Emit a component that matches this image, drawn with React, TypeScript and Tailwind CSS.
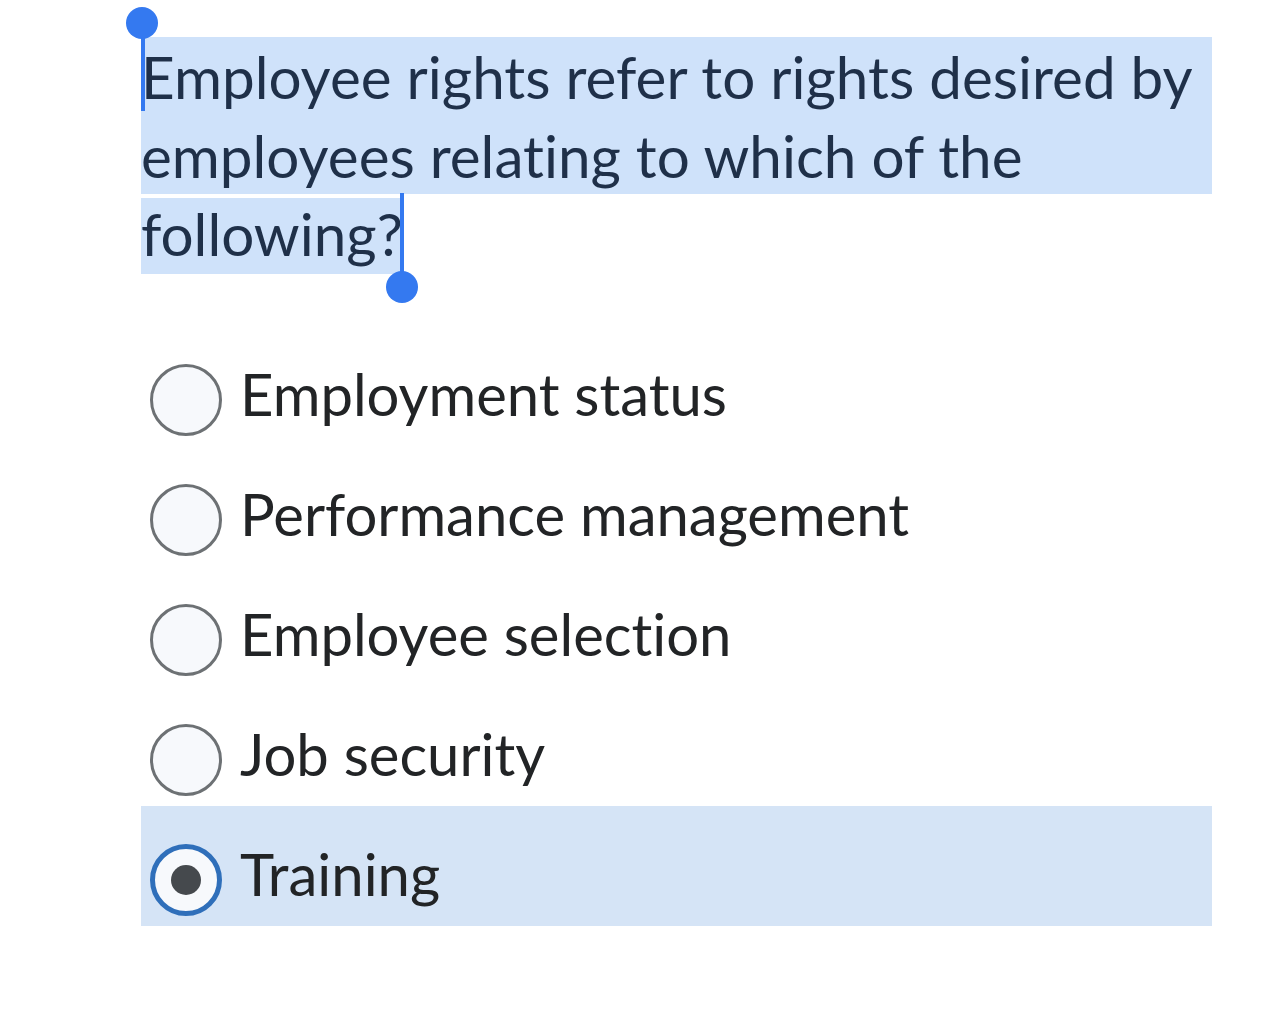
import React from 'react';

const options = [
  'Employment status',
  'Performance management',
  'Employee selection',
  'Job security',
  'Training',
];

const SELECTED = 4;

function Radio({ checked }: { checked: boolean }) {
  if (checked) {
    return (
      <span className="flex h-[72px] w-[72px] shrink-0 items-center justify-center rounded-full border-[5px] border-[#2f6fba] bg-[#f7f9fc]">
        <span className="h-[30px] w-[30px] rounded-full bg-[#45494d]" />
      </span>
    );
  }
  return (
    <span className="h-[72px] w-[72px] shrink-0 rounded-full border-[3px] border-[#6d7174] bg-[#f7f9fc]" />
  );
}

export default function App() {
  return (
    <div className="min-h-[1018px] w-[1284px] bg-white font-['Lato',sans-serif] [font-variant-ligatures:none]">
      <div className="ml-[141px] w-[1071px] pt-[37px]">
        {/* question with text selection */}
        <div className="relative text-[58.4px] leading-[78.5px] text-[#1f3049]">
          <div className="bg-[#cfe2fa]">Employee rights refer to rights desired by</div>
          <div className="bg-[#cfe2fa]">employees relating to which of the</div>
          <div>
            <span className="bg-[#cfe2fa] pb-[6px]">following?</span>
          </div>
          <span className="absolute left-0 top-0 h-[74px] w-[4px] bg-[#3479f0]" />
          <span className="absolute left-[-15px] top-[-30px] h-[32px] w-[32px] rounded-full bg-[#3479f0]" />
          <span className="absolute left-[259px] top-[156px] h-[92px] w-[4px] bg-[#3479f0]" />
          <span className="absolute left-[245px] top-[234px] h-[32px] w-[32px] rounded-full bg-[#3479f0]" />
        </div>

        <div className="mt-[53px] flex flex-col">
          {options.map((o, i) => (
            <label
              key={o}
              className={`h-[120px] pl-[9px] pt-[38px] text-[58px] text-[#222426] ${
                i === SELECTED ? 'bg-[#d5e4f6]' : ''
              }`}
            >
              <div className="flex items-center gap-[18px]">
                <Radio checked={i === SELECTED} />
                <span className="-mt-[14px]">{o}</span>
              </div>
            </label>
          ))}
        </div>
      </div>
    </div>
  );
}
